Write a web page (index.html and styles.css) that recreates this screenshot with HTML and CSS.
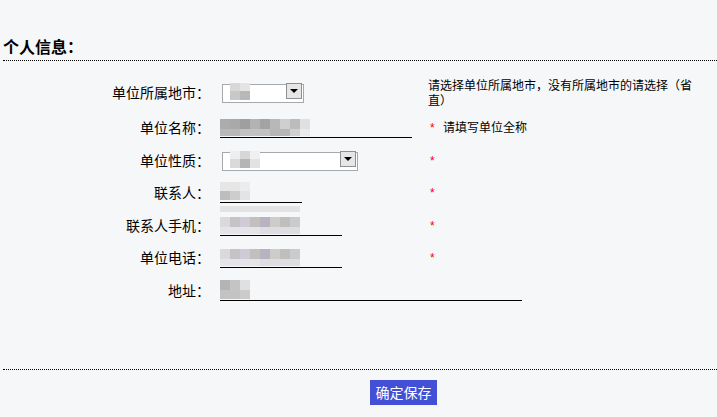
FILE: index.html
```html
<!DOCTYPE html>
<html>
<head>
    <meta charset="UTF-8">
    <title>个人信息</title>
    <link rel="stylesheet" href="styles.css">
</head>
<body>
<div class="page">
    <div class="section-head">个人信息：</div>

    <form id="info-form" class="info-form">
        <div class="row row-first">
            <label class="label" for="city">单位所属地市：</label>
            <div class="field">
                <div class="select-box select-small">
                    <select id="city" name="city"><option></option></select>
                    <span class="arrow"></span>
                    <span class="mask mask-city"></span>
                </div>
            </div>
            <div class="hint">请选择单位所属地市，没有所属地市的请选择（省直）</div>
        </div>

        <div class="row">
            <label class="label" for="unit-name">单位名称：</label>
            <div class="field">
                <span class="line-box">
                    <input type="text" id="unit-name" class="line-input w-192">
                    <span class="mask mask-name"></span>
                </span>
            </div>
            <div class="hint"><span class="star">*</span>请填写单位全称</div>
        </div>

        <div class="row">
            <label class="label" for="unit-type">单位性质：</label>
            <div class="field">
                <div class="select-box select-wide">
                    <select id="unit-type" name="unit-type"><option></option></select>
                    <span class="arrow"></span>
                    <span class="mask mask-type"></span>
                </div>
            </div>
            <div class="hint"><span class="star">*</span></div>
        </div>

        <div class="row">
            <label class="label" for="contact">联系人：</label>
            <div class="field">
                <span class="line-box">
                    <input type="text" id="contact" class="line-input w-82">
                    <span class="mask mask-contact"></span>
                </span>
            </div>
            <div class="hint"><span class="star">*</span></div>
        </div>

        <div class="row">
            <label class="label" for="mobile">联系人手机：</label>
            <div class="field">
                <span class="line-box">
                    <input type="text" id="mobile" class="line-input w-122">
                    <span class="mask mask-phone"></span>
                </span>
            </div>
            <div class="hint"><span class="star">*</span></div>
        </div>

        <div class="row">
            <label class="label" for="tel">单位电话：</label>
            <div class="field">
                <span class="line-box">
                    <input type="text" id="tel" class="line-input w-122">
                    <span class="mask mask-phone"></span>
                </span>
            </div>
            <div class="hint"><span class="star">*</span></div>
        </div>

        <div class="row">
            <label class="label" for="address">地址：</label>
            <div class="field field-span">
                <span class="line-box">
                    <input type="text" id="address" class="line-input w-302">
                    <span class="mask mask-address"></span>
                </span>
            </div>
        </div>
    </form>

    <div class="form-foot">
        <button type="submit" form="info-form" class="save-btn">确定保存</button>
    </div>
</div>
</body>
</html>
```

FILE: styles.css
```css
body {
    margin: 0;
    background-color: #f6f7f9;
    font-family: "Noto Sans CJK SC", "Liberation Sans", sans-serif;
    font-size: 14px;
    color: #000;
}

.page {
    width: 717px;
}

.section-head {
    margin: 36px 0 0 3px;
    padding: 0 0 4px 0;
    height: 20px;
    line-height: 20px;
    font-size: 16px;
    font-weight: bold;
    border-bottom: 1px dotted #000;
}

.info-form {
    padding-top: 11px;
    height: 297px;
}

.row {
    display: grid;
    grid-template-columns: 210px 218px 289px;
    align-items: center;
    height: 32.5px;
}

.row-first {
    height: 39px;
}

.label {
    text-align: right;
    line-height: 16px;
}

.field {
    padding-left: 10px;
    position: relative;
}

.field-span {
    grid-column: 2 / 4;
}

.hint {
    width: 272px;
    font-size: 12px;
    line-height: 15px;
    padding-top: 1px;
}

.star {
    color: #f00;
    display: inline-block;
    width: 15px;
    padding-left: 2px;
    box-sizing: border-box;
    font-size: 12px;
    font-family: "Liberation Sans", sans-serif;
}

/* select boxes */
.select-box {
    position: relative;
    height: 19px;
    margin-left: 2px;
}

.select-small {
    width: 82px;
}

.select-wide {
    width: 136px;
}

.select-box select {
    -webkit-appearance: none;
    appearance: none;
    width: 100%;
    height: 19px;
    margin: 0;
    border: 1px solid #a5a9ae;
    background: #fff;
    border-radius: 0;
    box-sizing: border-box;
}

.arrow {
    position: absolute;
    right: 2px;
    top: 1px;
    width: 16px;
    height: 16px;
    background: #e6e6e6;
    border: 1px solid #8e8f93;
    box-sizing: border-box;
}

.arrow::after {
    content: "";
    position: absolute;
    left: 3px;
    top: 5px;
    border-left: 4px solid transparent;
    border-right: 4px solid transparent;
    border-top: 4px solid #000;
}

/* underline inputs */
.line-box {
    position: relative;
    display: inline-block;
}

.line-input {
    display: block;
    height: 18px;
    padding: 0;
    margin: 0;
    border: none;
    border-bottom: 1px solid #000;
    background: transparent;
    outline: none;
}

.w-82 { width: 82px; }
.w-122 { width: 122px; }
.w-192 { width: 192px; }
.w-302 { width: 302px; }

/* blurred values */
.mask {
    position: absolute;
    left: 0;
    filter: blur(0.6px);
}

.mask-city {
    left: 8px;
    top: 1px;
    width: 22px;
    height: 17px;
    background:
        linear-gradient(90deg, #d8d8d8 0 10px, #e4e4e4 10px 20px, transparent 20px) top / 100% 8px no-repeat,
        linear-gradient(90deg, #c8c8c8 0 10px, #b8b8b8 10px 20px, transparent 20px) bottom / 100% 9px no-repeat;
}

.mask-name {
    top: 0;
    width: 90px;
    height: 17px;
    background:
        linear-gradient(90deg, #acacac 0 10px, #a9a9a9 10px 20px, #9f9f9f 20px 30px, #b3b3b3 30px 40px, #a3a3a3 40px 50px, #b8b8b8 50px 60px, #cfcfcf 60px 70px, #bcbcbc 70px 80px, #e0e0e0 80px 90px) top / 100% 10px no-repeat,
        linear-gradient(90deg, #b8b8b8 0 20px, #c2c2c2 20px 50px, #b6b6b6 50px 70px, #d0d0d0 70px 80px, #eaeaea 80px 90px) bottom / 100% 7px no-repeat;
}

.mask-type {
    left: 8px;
    top: 1px;
    width: 30px;
    height: 17px;
    background:
        linear-gradient(90deg, #eeeeee 0 10px, #d7d7d7 10px 20px, #f0f0f0 20px 30px) top / 100% 8px no-repeat,
        linear-gradient(90deg, #dadada 0 10px, #b5b5b5 10px 20px, #e2e2e2 20px 30px) bottom / 100% 9px no-repeat;
}

.mask-contact {
    top: -2px;
    width: 30px;
    height: 18px;
    background:
        linear-gradient(90deg, #e6e6e6 0 20px, #ececec 20px 30px) top / 100% 9px no-repeat,
        linear-gradient(90deg, #bdbdbd 0 10px, #cdcdcd 10px 20px, #e4e4e4 20px 30px) bottom / 100% 9px no-repeat;
}

.mask-contact::after {
    content: "";
    position: absolute;
    left: 0;
    top: 24px;
    width: 80px;
    height: 6px;
    background: #e3e3e5;
}

.mask-phone {
    top: 0;
    width: 80px;
    height: 17px;
    background:
        linear-gradient(90deg, #dcd9dd 0 10px, #c6c3c6 10px 20px, #cfcbd4 20px 30px, #c3bfbf 30px 40px, #b9b3c1 40px 50px, #cdcccd 50px 60px, #c1bfbc 60px 70px, #cbcbcd 70px 80px) top / 100% 10px no-repeat,
        linear-gradient(90deg, #e6e4e8 0 40px, #dedde1 40px 80px) bottom / 100% 7px no-repeat;
}

.mask-address {
    top: -2px;
    width: 30px;
    height: 19px;
    background:
        linear-gradient(90deg, #b4b4b4 0 10px, #c4c4c4 10px 20px, #e0e0e0 20px 30px) top / 100% 10px no-repeat,
        linear-gradient(90deg, #c3c3c3 0 20px, #cbcbcb 20px 30px) bottom / 100% 9px no-repeat;
}

/* footer */
.form-foot {
    margin-left: 3px;
    border-top: 1px dotted #000;
    padding: 10px 0 0 367px;
}

.save-btn {
    background-color: #4350d6;
    color: #fff;
    font-family: "Noto Sans CJK SC", sans-serif;
    font-size: 14px;
    width: 67px;
    height: 25px;
    padding: 0;
    border: none;
    border-radius: 0;
    cursor: pointer;
    line-height: 25px;
}
```
